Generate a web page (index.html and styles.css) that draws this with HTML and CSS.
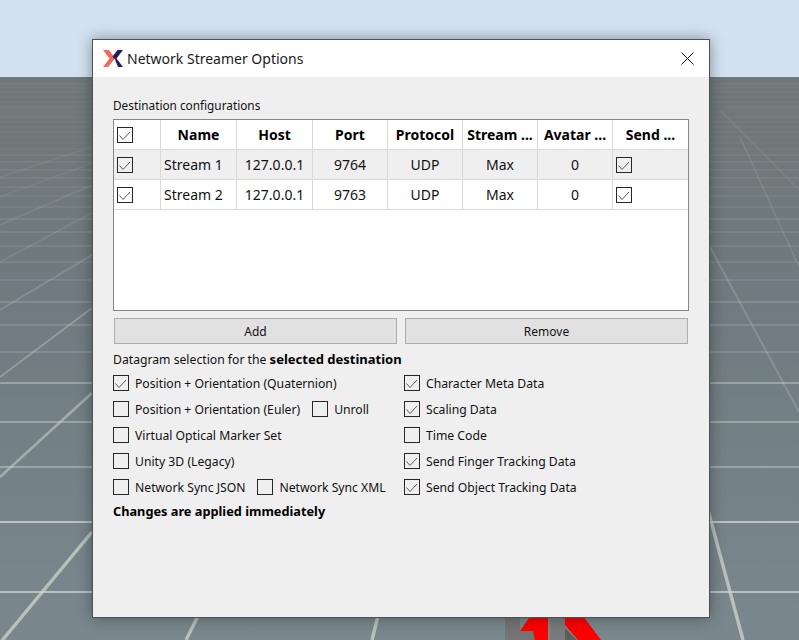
FILE: index.html
```html
<!DOCTYPE html>
<html lang="en">
<head>
<meta charset="utf-8">
<title>Network Streamer Options</title>
<link rel="stylesheet" href="styles.css">
</head>
<body>
<svg class="scene" width="799" height="640" viewBox="0 0 799 640" aria-hidden="true">
  <defs>
    <linearGradient id="floor" x1="0" y1="0" x2="0" y2="1">
      <stop offset="0" stop-color="#6f7878"/>
      <stop offset="0.4" stop-color="#6f7b7f"/>
      <stop offset="1" stop-color="#7a888d"/>
    </linearGradient>
    <filter id="soft"><feGaussianBlur stdDeviation="0.45"/></filter>
  </defs>
  <rect width="799" height="78" fill="#d3e2f1"/>
  <rect y="77" width="799" height="563" fill="url(#floor)"/>
  <g filter="url(#soft)" stroke="#d4d8d2" fill="none">
    <path stroke-width="0.8" stroke-opacity="0.1" d="M0 84H799M0 88H799M0 92H799M0 97H799M0 102H799M0 107H799M0 112H799M0 117H799M0 122H799M0 127H799M0 132H799M0 137H799M0 143H799M0 149H799"/>
    <path stroke-width="1" stroke-opacity="0.15" d="M0 155H799M0 162H799M0 170H799M0 178H799M0 187H799M0 196H799M0 207H799"/>
    <path stroke-width="1" stroke-opacity="0.22" d="M0 219H799M0 232H799M0 246H799M0 262H799M0 280H799"/>
    <path stroke-width="1.2" stroke-opacity="0.36" d="M0 302H799M0 325H799M0 352H799"/>
    <path stroke-width="1.6" stroke-opacity="0.55" d="M0 383H799M0 422H799M0 467H799"/>
    <path stroke-width="2" stroke-opacity="0.72" d="M0 522H799M0 592H799"/>
    <path stroke-width="1.4" stroke-opacity="0.08" d="M0 177L92 147M0 197L92 163M720 110L799 190"/>
    <path stroke-width="1.8" stroke-opacity="0.12" d="M0 225L92 185M0 262L92 213M740 137L799 267"/>
    <path stroke-width="2" stroke-opacity="0.22" d="M0 310L92 255M710 247L799 412"/>
    <path stroke-width="2" stroke-opacity="0.34" d="M0 377L92 308"/>
    <path stroke-width="2.6" stroke-opacity="0.5" d="M0 477L92 393"/>
    <path stroke-width="3.4" stroke-opacity="0.7" d="M0 643L92 532M200 612L186 640M379 612L372 640M708 510L743 640"/>
  </g>
  <path fill="#747474" d="M505 610H520V631H535V640H505Z"/>
  <path fill="#7a7a7a" d="M550 610H565V640H550Z"/>
  <path fill="#5d5d5d" d="M565 628L577 640H565Z"/>
  <path fill="#ff0000" d="M533 612H548V640H535L533 631H520Z"/>
  <path fill="#ff0000" d="M565 612H580L601 640H578L565 625Z"/>
</svg>

<main class="window">
  <header class="titlebar">
    <svg class="logo" width="20" height="17" viewBox="0 0 20 17" aria-hidden="true">
      <path fill="#ee6a5c" d="M0 0H6L12 8.5L5 17H0L6.5 8.5Z"/>
      <path fill="#2c1a63" d="M20 0H14.5L9.5 6.5L12 9.5L15 17H20L13.5 8.5Z"/>
    </svg>
    <h1 class="title">Network Streamer Options</h1>
    <svg class="close" width="13" height="13" viewBox="0 0 13 13" aria-hidden="true">
      <path d="M0.5 0.5L12.5 12.5M12.5 0.5L0.5 12.5" stroke="#111" stroke-width="1" fill="none"/>
    </svg>
  </header>

  <section class="content">
    <p class="label first">Destination configurations</p>

    <div class="table-frame">
      <table class="grid">
        <thead>
          <tr>
            <th><span class="box on"><svg viewBox="0 0 16 16"><path d="M2.5 8.5L6 12.5L13 5"/></svg></span></th>
            <th>Name</th><th>Host</th><th>Port</th><th>Protocol</th><th>Stream ...</th><th>Avatar ...</th><th>Send ...</th>
          </tr>
        </thead>
        <tbody>
          <tr class="alt">
            <td><span class="box on"><svg viewBox="0 0 16 16"><path d="M2.5 8.5L6 12.5L13 5"/></svg></span></td>
            <td class="left">Stream 1</td><td>127.0.0.1</td><td>9764</td><td>UDP</td><td>Max</td><td>0</td>
            <td class="left"><span class="box on"><svg viewBox="0 0 16 16"><path d="M2.5 8.5L6 12.5L13 5"/></svg></span></td>
          </tr>
          <tr>
            <td><span class="box on"><svg viewBox="0 0 16 16"><path d="M2.5 8.5L6 12.5L13 5"/></svg></span></td>
            <td class="left">Stream 2</td><td>127.0.0.1</td><td>9763</td><td>UDP</td><td>Max</td><td>0</td>
            <td class="left"><span class="box on"><svg viewBox="0 0 16 16"><path d="M2.5 8.5L6 12.5L13 5"/></svg></span></td>
          </tr>
        </tbody>
      </table>
    </div>

    <div class="actions">
      <button class="btn" type="button">Add</button>
      <button class="btn" type="button">Remove</button>
    </div>

    <p class="label heading">Datagram selection for the <b>selected destination</b></p>

    <div class="options">
      <div class="opt-row"><span class="opt"><span class="box on"><svg viewBox="0 0 16 16"><path d="M2.5 8.5L6 12.5L13 5"/></svg></span>Position + Orientation (Quaternion)</span></div>
      <div class="opt-row"><span class="opt"><span class="box on"><svg viewBox="0 0 16 16"><path d="M2.5 8.5L6 12.5L13 5"/></svg></span>Character Meta Data</span></div>

      <div class="opt-row"><span class="opt"><span class="box"></span>Position + Orientation (Euler)</span><span class="opt"><span class="box"></span>Unroll</span></div>
      <div class="opt-row"><span class="opt"><span class="box on"><svg viewBox="0 0 16 16"><path d="M2.5 8.5L6 12.5L13 5"/></svg></span>Scaling Data</span></div>

      <div class="opt-row"><span class="opt"><span class="box"></span>Virtual Optical Marker Set</span></div>
      <div class="opt-row"><span class="opt"><span class="box"></span>Time Code</span></div>

      <div class="opt-row"><span class="opt"><span class="box"></span>Unity 3D (Legacy)</span></div>
      <div class="opt-row"><span class="opt"><span class="box on"><svg viewBox="0 0 16 16"><path d="M2.5 8.5L6 12.5L13 5"/></svg></span>Send Finger Tracking Data</span></div>

      <div class="opt-row"><span class="opt"><span class="box"></span>Network Sync JSON</span><span class="opt"><span class="box"></span>Network Sync XML</span></div>
      <div class="opt-row"><span class="opt"><span class="box on"><svg viewBox="0 0 16 16"><path d="M2.5 8.5L6 12.5L13 5"/></svg></span>Send Object Tracking Data</span></div>
    </div>

    <p class="label notice"><b>Changes are applied immediately</b></p>
  </section>
</main>
</body>
</html>
```

FILE: styles.css
```css
* { box-sizing: border-box; }

html, body {
  margin: 0;
  height: 100%;
  overflow: hidden;
}

body {
  position: relative;
  width: 799px;
  height: 640px;
  font-family: "Noto Sans", "Open Sans", sans-serif;
  color: #111;
}

.scene {
  position: absolute;
  left: 0;
  top: 0;
  display: block;
}

.window {
  position: absolute;
  left: 92px;
  top: 39px;
  width: 618px;
  height: 579px;
  display: flex;
  flex-direction: column;
  background: #efefef;
  border: 1px solid #4c5256;
  box-shadow: 0 0 14px rgba(20, 25, 30, 0.42);
}

.titlebar {
  height: 37px;
  flex: none;
  display: flex;
  align-items: center;
  padding: 0 15px 0 10px;
  background: #fff;
}

.logo { flex: none; margin-top: -1px; }

.title {
  flex: 1;
  margin: 0 0 0 4px;
  font-size: 14px;
  font-weight: 400;
  color: #1a1a1a;
}

.close { flex: none; }

.content {
  flex: 1;
  padding: 18px 20px 0;
}

.label {
  margin: 0;
  font-size: 12px;
  line-height: 20px;
}

.label b { color: #000; }

.first { height: 24px; font-size: 11.8px; }

.table-frame {
  height: 192px;
  background: #fff;
  border: 1px solid #85858d;
}

.grid {
  width: 574px;
  table-layout: fixed;
  border-collapse: separate;
  border-spacing: 0;
  background: #fff;
}

.grid th, .grid td {
  height: 30px;
  padding: 0;
  text-align: center;
  white-space: nowrap;
  overflow: hidden;
  border-right: 1px solid #d9d9d9;
  border-bottom: 1px solid #d9d9d9;
  font-size: 14px;
}

.grid th { font-weight: 700; color: #000; }
.grid th:nth-child(1) { width: 47px; }
.grid th:nth-child(2), .grid th:nth-child(3) { width: 76px; }
.grid th:nth-child(n+4) { width: 75px; }
.grid th:last-child { width: auto; border-right: 0; }
.grid td:last-child { border-right: 0; }

.grid th:first-child, .grid td:first-child,
.grid td.left { text-align: left; padding-left: 3px; }
.grid .box { display: block; margin-bottom: -1px; }

.alt td { background: #efefef; }

.box {
  display: inline-block;
  flex: none;
  width: 16px;
  height: 16px;
  border: 1px solid #262626;
  background: #fff;
}

.alt .box { background: #efefef; }
.options .box { background: transparent; }

.box svg {
  display: block;
  width: 16px;
  height: 16px;
  margin: -1px;
  fill: none;
  stroke: #5c5c5c;
  stroke-width: 1;
}

.actions {
  display: flex;
  gap: 8px;
  padding: 7px 1px 0;
}

.btn {
  flex: 1;
  height: 26px;
  padding: 0;
  background: #e1e1e1;
  border: 1px solid #adadad;
  font: inherit;
  font-size: 12px;
  color: #111;
}

.heading {
  height: 20px;
  margin-top: 5px;
  font-size: 12.2px;
}

.heading b { font-size: 13px; }

.options {
  display: grid;
  grid-template-columns: 291px 1fr;
  grid-auto-rows: 26px;
  margin-top: 1px;
}

.opt-row {
  display: flex;
  align-items: center;
  gap: 12px;
}

.opt {
  display: flex;
  align-items: center;
  gap: 6px;
  font-size: 12.2px;
  white-space: nowrap;
}

.notice {
  height: 20px;
  margin-top: 1px;
  font-size: 12.75px;
}
```
